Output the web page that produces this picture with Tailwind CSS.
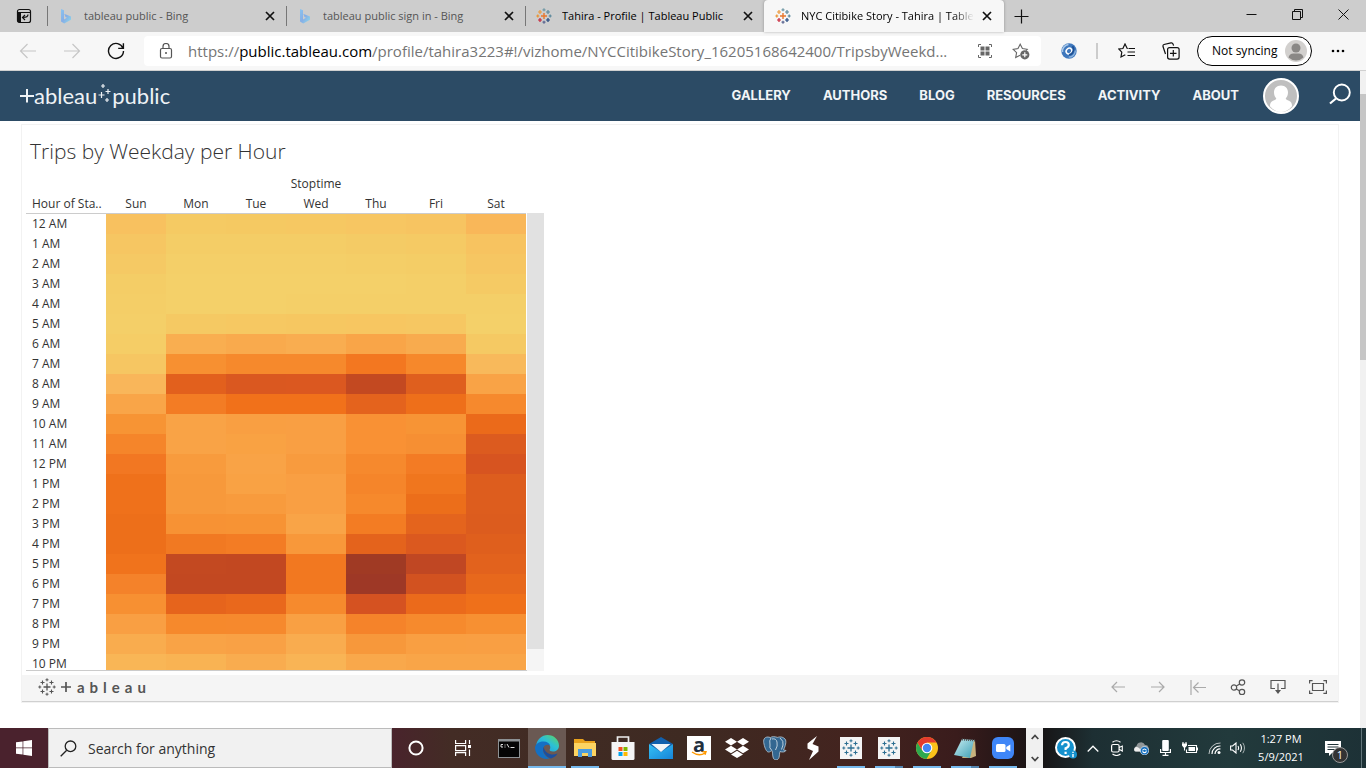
<!DOCTYPE html>
<html lang="en">
<head>
<meta charset="utf-8">
<title>NYC Citibike Story - Tahira | Tableau Public</title>
<script src="https://cdn.jsdelivr.net/npm/@tailwindcss/browser@4"></script>
</head>
<body class="h-screen flex flex-col overflow-hidden bg-white font-['Open_Sans','Noto_Sans',sans-serif] text-black">
<svg class="absolute size-0" aria-hidden="true">
  <defs>
    <linearGradient id="bingFill" x1="0" y1="0" x2="1" y2="1"><stop offset="0" stop-color="#8ac4f0"/><stop offset=".5" stop-color="#86aee6"/><stop offset="1" stop-color="#8fdcea"/></linearGradient>
    <linearGradient id="edgeA" x1="0" y1="1" x2="1" y2="0"><stop offset="0" stop-color="#1b8fdd"/><stop offset=".55" stop-color="#2cbfd6"/><stop offset="1" stop-color="#62d957"/></linearGradient>
    <linearGradient id="mailFill" x1="0" y1="0" x2="1" y2="1"><stop offset="0" stop-color="#35c0f5"/><stop offset="1" stop-color="#1785d8"/></linearGradient>
    <linearGradient id="noteFill" x1="0" y1="0" x2="1" y2="1"><stop offset="0" stop-color="#c9eef2"/><stop offset="1" stop-color="#3d9fb5"/></linearGradient>
    <symbol id="bing" viewBox="0 0 16 16"><path d="M3 1l3 1.200v9.300l3-1.700-1.500-.8-1.300-3.200L13 8.500v3.300L6.200 15.500 3 13.500z" fill="url(#bingFill)"/></symbol>
    <symbol id="close" viewBox="0 0 10 10"><path d="M1 1l8 8M9 1l-8 8" stroke="#111" stroke-width="1.700" fill="none"/></symbol>
    <symbol id="tab" viewBox="0 0 16 16"><g fill="none" stroke-width="1.200"><path d="M8 5v6M5 8h6" stroke="#e8762c" stroke-width="1.400"/><path d="M4 2v4M2 4h4" stroke="#ec9a3c"/><path d="M12 2v4M10 4h4" stroke="#5b879b"/><path d="M4 10v4M2 12h4" stroke="#c72035"/><path d="M12 10v4M10 12h4" stroke="#1f447e"/><path d="M8 .3v3M6.500 1.800h3" stroke="#7099a6"/><path d="M8 12.700v3M6.500 14.200h3" stroke="#5b6591"/><path d="M.3 8h3M1.800 6.500v3" stroke="#eb912c"/><path d="M12.700 8h3M14.200 6.500v3" stroke="#59879b"/></g></symbol>
    <symbol id="tabMono" viewBox="0 0 18 18"><g fill="none" stroke="currentColor"><path d="M9 5.500v7M5.500 9h7" stroke-width="1.300"/><path d="M4.500 2.500v4M2.500 4.500h4M13.500 2.500v4M11.500 4.500h4M4.500 11.500v4M2.500 13.500h4M13.500 11.500v4M11.500 13.500h4" stroke-width="1.100"/><path d="M9 .3v3M7.500 1.800h3M9 14.700v3M7.500 16.200h3M.3 9h3M1.800 7.500v3M14.700 9h3M16.200 7.500v3" stroke-width="1"/></g></symbol>
  </defs>
</svg>

<!-- Browser tabs -->
<header class="shrink-0">
  <div class="flex h-8 bg-[#cdcdcd] text-[11px] text-[#555]">
    <button aria-label="Tab actions" class="w-[47px] shrink-0 flex items-center justify-center"><svg class="size-4" viewBox="0 0 16 16"><rect x="1.500" y="1.500" width="13" height="13" rx="2" fill="none" stroke="#111" stroke-width="1.200"/><path d="M1.500 4.500h3.500v10H3a1.500 1.500 0 0 1-1.500-1.500z" fill="#111"/><path d="M2 4.500h12.500" stroke="#111"/><path d="M12 6.500q0 3-5 3M9 7L6.500 9.500 9 12" fill="none" stroke="#111" stroke-width="1.200"/></svg></button>
    <div class="relative w-[239px] min-w-0 flex items-center gap-[10px] pl-[11px] pr-[11px]"><span class="absolute left-0 top-[6px] h-5 w-px bg-[#777]"></span><svg class="size-4 shrink-0"><use href="#bing"/></svg><span class="flex-1 truncate">tableau public - Bing</span><button aria-label="Close tab"><svg class="size-[10px]"><use href="#close"/></svg></button></div>
    <div class="relative w-[239px] min-w-0 flex items-center gap-[10px] pl-[11px] pr-[11px]"><span class="absolute left-0 top-[6px] h-5 w-px bg-[#777]"></span><svg class="size-4 shrink-0"><use href="#bing"/></svg><span class="flex-1 truncate">tableau public sign in - Bing</span><button aria-label="Close tab"><svg class="size-[10px]"><use href="#close"/></svg></button></div>
    <div class="relative w-[239px] min-w-0 flex items-center gap-[10px] pl-[11px] pr-[11px] text-black"><span class="absolute left-0 top-[6px] h-5 w-px bg-[#777]"></span><svg class="size-4 shrink-0"><use href="#tab"/></svg><span class="flex-1 truncate">Tahira - Profile | Tableau Public</span><button aria-label="Close tab"><svg class="size-[10px]"><use href="#close"/></svg></button></div>
    <div class="w-60 min-w-0 flex items-center gap-2 pl-[11px] pr-3 rounded-t-[4px] bg-[#f7f7f7] text-black shadow-[0_0_3px_rgba(0,0,0,.3)]"><svg class="size-4 shrink-0 mr-[2px]"><use href="#tab"/></svg><span class="flex-1 whitespace-nowrap mask-r-from-88% mask-r-to-100%">NYC Citibike Story - Tahira | Table</span><button aria-label="Close tab"><svg class="size-[10px]"><use href="#close"/></svg></button></div>
    <button aria-label="New tab" class="w-[35px] flex items-center justify-center"><svg class="size-[15px]" viewBox="0 0 15 15"><path d="M7.500 .5v14M.5 7.500h14" stroke="#111" stroke-width="1.200"/></svg></button>
    <div class="ml-auto flex pb-1">
      <button aria-label="Minimize" class="w-[46px] flex items-center justify-center"><svg class="size-[11px]" viewBox="0 0 11 11"><path d="M.5 5.500h10" stroke="#111"/></svg></button>
      <button aria-label="Restore" class="w-[46px] flex items-center justify-center"><svg class="size-[11px]" viewBox="0 0 11 11"><path d="M.5 2.500h8v8h-8zM2.500 2.500v-2h8v8h-2" fill="none" stroke="#111"/></svg></button>
      <button aria-label="Close window" class="w-[46px] flex items-center justify-center"><svg class="size-[11px]" viewBox="0 0 11 11"><path d="M.5 .5l10 10M10.500 .5l-10 10" stroke="#111"/></svg></button>
    </div>
  </div>

  <!-- Address bar -->
  <div class="flex items-center h-[39px] bg-[#f7f7f7] border-b border-[#d0d0d0] pl-[6px] pr-[6px]">
    <button aria-label="Back" class="w-11 flex justify-center"><svg class="size-[18px]" viewBox="0 0 18 18"><path d="M17 9H1.500M8.500 2l-7 7 7 7" fill="none" stroke="#c6c6c6" stroke-width="1.200"/></svg></button>
    <button aria-label="Forward" class="w-11 flex justify-center"><svg class="size-[18px]" viewBox="0 0 18 18"><path d="M1 9h15.500M9.500 2l7 7-7 7" fill="none" stroke="#c6c6c6" stroke-width="1.200"/></svg></button>
    <button aria-label="Reload" class="w-11 flex justify-center"><svg class="size-[18px]" viewBox="0 0 18 18"><path d="M16 6.200A7.500 7.500 0 1 0 16.500 9M16.400 1.200v5.200h-5.200" fill="none" stroke="#111" stroke-width="1.400"/></svg></button>
    <div class="ml-[6px] flex-1 min-w-0 h-[30px] flex items-center rounded-[4px] bg-white pl-[15px] pr-[11px]">
      <svg class="w-[14px] h-4 shrink-0" viewBox="0 0 14 16"><rect x="1.500" y="5.500" width="11" height="9.500" rx="1.500" fill="none" stroke="#555" stroke-width="1.200"/><path d="M4 5.500V3.500a3 3 0 0 1 6 0v2" fill="none" stroke="#555" stroke-width="1.200"/><circle cx="7" cy="10" r="1" fill="#555"/></svg>
      <div role="textbox" aria-label="Address" contenteditable="true" class="ml-[15px] flex-1 min-w-0 truncate text-[15px] leading-5 text-[#757575]">https://<span class="text-black">public.tableau.com</span>/profile/tahira3223#!/vizhome/NYCCitibikeStory_16205168642400/TripsbyWeekd...</div>
      <button aria-label="QR code"><svg class="size-[14px]" viewBox="0 0 14 14"><path d="M.5 3V.5H3M11 .5h2.500V3M13.500 11v2.500H11M3 13.500H.5V11" fill="none" stroke="#666"/><path d="M2.500 2.500h4v4h-4zM7.500 2.500h4v4h-4zM2.500 7.500h4v4h-4zM7.500 7.500h4v4h-4z" fill="#666"/></svg></button>
      <button aria-label="Add to favorites" class="ml-5"><svg class="size-[18px]" viewBox="0 0 18 18"><path d="M8 13.200l-4.300 2.300.9-4.800L1.200 7.300l4.800-.7L8.200 2.200l2.200 4.400 4.800.7-1.200 1.200" fill="none" stroke="#666" stroke-width="1.100"/><circle cx="12.800" cy="12.800" r="4.600" fill="#666"/><path d="M12.800 10.300v5M10.300 12.800h5" stroke="#fff" stroke-width="1.200"/></svg></button>
    </div>
    <button aria-label="Extension" class="ml-5"><svg class="size-4" viewBox="0 0 16 16"><circle cx="8" cy="8" r="7.700" fill="#3f78bd"/><path d="M1.500 9a6.700 6.700 0 0 1 6-7.500" stroke="#a9c8e8" stroke-width="1.600" fill="none"/><path d="M14.300 7.500a6.500 6.500 0 0 1-6.500 6.700" fill="none" stroke="#8fb5de" stroke-width="1.300"/><ellipse cx="8" cy="8" rx="3" ry="2.600" transform="rotate(-40 8 8)" fill="none" stroke="#fff" stroke-width="1.500"/><path d="M11.500 3.200c2.500 3 .5 8-3.500 8.500" fill="none" stroke="#1d4f93" stroke-width="1.600"/></svg></button>
    <span class="ml-[19px] h-4 w-[2px] bg-[#ccc]"></span>
    <button aria-label="Favorites" class="ml-5"><svg class="w-[18px] h-4" viewBox="0 0 18 16"><path d="M9.800 5.500h-.6L7 1 4.900 5.500 .8 6l3 3.200-.8 4.800 4.300-2.300" fill="none" stroke="#111" stroke-width="1.200"/><path d="M10.500 5.500h6.500M9.500 9h7.500M9.500 12.500h7.500" stroke="#111" stroke-width="1.200"/></svg></button>
    <button aria-label="Collections" class="ml-[26px]"><svg class="size-[18px]" viewBox="0 0 18 18"><rect x="5.600" y="5.600" width="11.500" height="11.500" rx="2" fill="none" stroke="#111" stroke-width="1.200"/><path d="M11.300 8v6.500M8 11.300h6.500M3.500 12L1 4.500Q.7 3 2 2.500L9 .9q1.500-.3 2 1.100l.6 1.600" fill="none" stroke="#111" stroke-width="1.200"/></svg></button>
    <button class="ml-[17px] h-[30px] w-[115px] flex items-center justify-between rounded-full border border-black bg-white pl-[14px] pr-1 text-[12px] whitespace-nowrap">Not syncing<svg class="size-[22px]" viewBox="0 0 22 22"><circle cx="11" cy="11" r="11" fill="#d2d0ce"/><circle cx="11" cy="8" r="4.500" fill="#8a8886"/><path d="M3.500 17.500q1-4 5-4h5q4 0 5 4a11 11 0 0 1-15 0" fill="#8a8886"/></svg></button>
    <button aria-label="More" class="w-12 pl-1 flex justify-center"><svg class="w-[14px] h-1" viewBox="0 0 14 4"><circle cx="2" cy="2" r="1.300"/><circle cx="7" cy="2" r="1.300"/><circle cx="12" cy="2" r="1.300"/></svg></button>
  </div>
</header>

<!-- Page -->
<div class="flex-1 min-h-0 flex">
  <main class="flex-1 min-w-0 flex flex-col">
    <div class="h-[50px] shrink-0 flex items-center bg-[#2c4b65] pl-5 pr-[9px] text-white">
      <a href="#" aria-label="Tableau Public" class="flex items-center font-[Lato,sans-serif] text-[22px] leading-6 text-[#eef2f5]"><svg class="w-[14px] h-6" viewBox="0 0 14 24"><path d="M0 12h14M7 5v13.500" stroke="currentColor" stroke-width="2"/></svg><span>ableau</span><svg class="w-[14px] h-6" viewBox="0 0 14 24"><path d="M6 0v4M4 2h4M4.500 8v6M1.500 11h6M11 5v5M8.500 7.500h5M10 14v4M8 16h4" stroke="currentColor" stroke-width="1.200"/></svg><span class="pl-px">public</span></a>
      <nav class="ml-auto flex gap-8 pb-[2px] font-[Inter,Roboto,sans-serif] font-bold text-[13px] leading-5 text-[#f2f5f7]"><a href="#">GALLERY</a><a href="#">AUTHORS</a><a href="#">BLOG</a><a href="#">RESOURCES</a><a href="#">ACTIVITY</a><a href="#">ABOUT</a></nav>
      <button aria-label="Account" class="ml-6"><svg class="size-9" viewBox="0 0 36 36"><circle cx="18" cy="18" r="17" fill="#bfbfbf"/><path d="M18 7.500c4.500 0 7 3 7 7 0 2.600-1 4.500-2.300 6 .3 1.300 1.500 1.600 3.300 2.200 2.500.8 3 3.300 3 5.500-3 3.800-7 5.800-11 5.800s-8-2-11-5.800c0-2.200.5-4.700 3-5.500 1.800-.6 3-.9 3.300-2.200-1.300-1.500-2.300-3.400-2.300-6 0-4 2.500-7 7-7" fill="#fff"/><circle cx="18" cy="18" r="17" fill="none" stroke="#fff" stroke-width="2"/></svg></button>
      <button aria-label="Search" class="ml-[30px] pb-1"><svg class="size-[22px]" viewBox="0 0 22 22"><circle cx="12.800" cy="9.500" r="8" fill="none" stroke="#fff" stroke-width="1.900"/><path d="M7 15.500L1 20.500" stroke="#fff" stroke-width="2.200"/></svg></button>
    </div>

    <section class="mt-[3px] mx-[21px] flex flex-col border border-[#f2f2f2]">
      <h1 class="mt-2 ml-2 text-[21px] leading-9 font-light text-[#333]">Trips by Weekday per Hour</h1>
      <div class="mt-[5px] ml-1 flex items-end">
        <div class="h-[497px] overflow-hidden border-b border-[#ccc] w-[501px]">
          <table class="table-fixed border-separate border-spacing-0 w-[500px] text-[12px] leading-5 text-[#333]">
            <colgroup><col class="w-20"><col class="w-[60px]" span="7"></colgroup>
            <thead>
              <tr class="h-5"><th class="p-0"></th><th colspan="7" class="p-0 font-normal">Stoptime</th></tr>
              <tr id="days" class="h-5 leading-[19px]"><th scope="col" class="p-0 pl-[6px] font-normal text-left whitespace-nowrap border-b border-[#ccc]">Hour of Sta..</th></tr>
            </thead>
            <tbody id="heat"></tbody>
          </table>
        </div>
        <div class="h-[458px] w-[17px] bg-[#f5f5f5]"><div class="h-[436px] bg-[#e1e1e1]"></div></div>
      </div>
      <footer class="mt-1 h-[27px] flex items-center bg-[#f5f5f5] border-b border-[#d0d0d0] pl-4 pb-[2px] text-[#555]">
        <a href="#" aria-label="Tableau" class="flex items-center font-[Lato,sans-serif] text-[15px] leading-5 tracking-[5px] font-bold"><svg class="size-[18px] mr-[5px]"><use href="#tabMono"/></svg><svg class="w-[10px] h-[14px] mr-[6px]" viewBox="0 0 10 14"><path d="M0 7h10M5 2v10" stroke="currentColor" stroke-width="1.700"/></svg>ableau</a>
        <div class="ml-auto flex items-center">
          <button aria-label="Undo" class="w-10 flex justify-center"><svg class="w-[14px] h-3" viewBox="0 0 14 12"><path d="M14 6H1M6 1L1 6l5 5" fill="none" stroke="#aaa" stroke-width="1.200"/></svg></button>
          <button aria-label="Redo" class="w-10 flex justify-center"><svg class="w-[14px] h-3" viewBox="0 0 14 12"><path d="M0 6h13M8 1l5 5-5 5" fill="none" stroke="#aaa" stroke-width="1.200"/></svg></button>
          <button aria-label="Revert" class="w-10 flex justify-center"><svg class="w-4 h-[15px]" viewBox="0 0 16 15"><path d="M1 0v15M16 7.500H3.500M8.500 2.500l-5 5 5 5" fill="none" stroke="#aaa" stroke-width="1.200"/></svg></button>
          <button aria-label="Share" class="w-10 flex justify-center"><svg class="size-4" viewBox="0 0 16 16"><g fill="none" stroke="#555" stroke-width="1.200"><circle cx="4" cy="8.500" r="2.700"/><circle cx="12" cy="3.500" r="2.700"/><circle cx="12" cy="13" r="2.700"/><path d="M6.300 7l3.500-2M6.300 10l3.500 2"/></g></svg></button>
          <button aria-label="Download" class="w-10 flex justify-center"><svg class="size-4" viewBox="0 0 16 16"><path d="M5 9.500H1v-8h14v8h-4M8 4.500v7" fill="none" stroke="#555" stroke-width="1.200"/><path d="M5 11h6l-3 4z" fill="#555"/></svg></button>
          <button aria-label="Full screen" class="w-10 flex justify-center"><svg class="w-[18px] h-[14px]" viewBox="0 0 18 14"><path d="M.6 3.500V.6h3M14.400 .6h3v2.900M17.400 10.500v2.900h-3M3.600 13.400h-3v-2.900M3.500 3.500h11v7h-11z" fill="none" stroke="#555" stroke-width="1.200"/></svg></button>
        </div>
      </footer>
    </section>
  </main>
  <div class="w-[6px] shrink-0 bg-[#f1f1f1] pt-[23px]"><div class="h-[266px] bg-[#c6c6c6]"></div></div>
</div>

<!-- Taskbar -->
<footer class="h-10 shrink-0 flex items-stretch text-white bg-[linear-gradient(90deg,#4a222d_0%,#4a222d_28%,#432c25_33%,#3e2a22_50%,#43241f_62%,#3a1c1c_70%,#171314_76%,#1d2f33_80%,#223a3c_90%,#1d3136_100%)]">
  <button aria-label="Start" class="w-12 flex items-center justify-center"><svg class="size-4" viewBox="0 0 16 16"><path d="M0 2.300l6.600-.9v6.200H0zM7.300 1.300L16 0v7.600H7.300zM0 8.300h6.600v6.300L0 13.700zM7.300 8.300H16V16l-8.700-1.300z" fill="#fff"/></svg></button>
  <label class="w-[344px] flex items-center gap-[11px] border border-[#bbb] bg-[#f1f1f1] pl-[11px]">
    <svg class="size-[17px] shrink-0" viewBox="0 0 17 17"><circle cx="10.500" cy="6.300" r="5.300" fill="none" stroke="#222" stroke-width="1.300"/><path d="M6.700 10.200L.7 16.200" stroke="#222" stroke-width="1.300"/></svg>
    <input type="text" aria-label="Search" placeholder="Search for anything" class="min-w-0 flex-1 bg-transparent text-[14px] outline-none placeholder:text-[#333]">
  </label>
  <button aria-label="Cortana" class="w-12 flex items-center justify-center"><svg class="size-4" viewBox="0 0 16 16"><circle cx="8" cy="8" r="6.600" fill="none" stroke="#fff" stroke-width="2"/></svg></button>
  <button aria-label="Task view" class="w-[46px] flex items-center justify-center"><svg class="size-4" viewBox="0 0 16 16"><path d="M.6 0v3.500h10V0M.6 5.600h10v5H.6zM.6 16v-3.300h10V16M14.500 0v4M14.500 9.500V16" fill="none" stroke="#fff" stroke-width="1.200"/><path d="M13 5h3v3h-3z" fill="#fff"/></svg></button>
  <div class="flex pl-1">
    <button aria-label="Command Prompt" class="w-[38px] flex items-center justify-center"><svg class="w-[22px] h-[19px]" viewBox="0 0 22 19"><path d="M0 0h22v19H0z" fill="#8d9194"/><path d="M1 2.500h20V18H1z" fill="#050505"/><path d="M5 5.500H3v2.500h2M6.500 6h1M6.500 8h1M9 5l2 3.500M12.500 8.500h4" stroke="#ddd" fill="none"/></svg></button>
    <button aria-label="Edge" class="w-[38px] flex items-center justify-center bg-[#6a5953] border-b-2 border-[#76b9ed]"><svg class="size-6" viewBox="0 0 24 24"><path d="M1 11C2 4 7 0 12.500 0 19 0 24 5 24 10.500c0 4-3 6-6 6-2.500 0-3.800-1-3.300-2 1.300-2 .8-6-4.200-7C6 7 2 8.500 1 11" fill="url(#edgeA)"/><path d="M0 12.500C.5 9 4 6.500 8.500 6.500c3.500 0 6 2 6.500 4-2-1.300-5-.8-6.300 1.500-2 4 1 9.500 6 11.500C7 25.500 0 20 0 12.500" fill="#1470c4"/><path d="M8.500 12c-1.800 4.500 2.500 10 7.500 11.400 3-1 5.500-3 6.500-5-5 2.500-12 1-14-6.400" fill="#1b4fa0"/></svg></button>
    <button aria-label="File Explorer" class="relative w-[38px] flex items-center justify-center"><svg class="w-[22px] h-[18px]" viewBox="0 0 22 18"><path d="M0 0h9l2 2h10v14H0z" fill="#e9a21c"/><path d="M0 4h22v13H0z" fill="#fcd462"/><path d="M4 18v-8h14v8h-4v-4H8v4z" fill="#4a9ce0"/></svg><span class="absolute inset-x-[5px] bottom-0 h-[2px] bg-[#76b9ed]"></span></button>
    <button aria-label="Store" class="w-[38px] flex items-center justify-center"><svg class="size-6" viewBox="0 0 24 24"><path d="M6.500 8V1h11v7" fill="none" stroke="#eee" stroke-width="1.700"/><path d="M.5 6h23v16.500q0 1.500-1.500 1.500H2q-1.500 0-1.500-1.500z" fill="#f5f5f5"/><path d="M7.500 11h4v4h-4z" fill="#f25022"/><path d="M12.500 11h4v4h-4z" fill="#7fba00"/><path d="M7.500 16h4v4h-4z" fill="#00a4ef"/><path d="M12.500 16h4v4h-4z" fill="#ffb900"/></svg></button>
    <button aria-label="Mail" class="w-[38px] flex items-center justify-center"><svg class="size-6" viewBox="0 0 24 24"><path d="M0 8L12 1l12 7-12 9z" fill="#1260ad"/><path d="M0 8l12 8 12-8v15H0z" fill="url(#mailFill)"/><path d="M2.500 8h19L12 16z" fill="#f2f5f8"/></svg></button>
    <button aria-label="Amazon" class="w-[38px] flex items-center justify-center"><span class="relative size-6 bg-white flex justify-center text-[20px] leading-[18px] font-bold text-[#222f3e]">a<svg class="absolute left-1 bottom-1 w-4 h-[5px]" viewBox="0 0 16 5"><path d="M1 1q7 5 13 1M11.500 .8l3.500-.1-1 3" fill="none" stroke="#f90" stroke-width="1.400"/></svg></span></button>
    <button aria-label="Dropbox" class="w-[38px] flex items-center justify-center"><svg class="w-6 h-5" viewBox="0 0 24 20"><path d="M6 0l6 3.700-6 3.700-6-3.700zM18 0l6 3.700-6 3.700-6-3.700zM6 7.800l6 3.700-6 3.700-6-3.700zM18 7.800l6 3.700-6 3.700-6-3.700zM12 12.700l6 3.700L12 20l-6-3.600z" fill="#fff"/></svg></button>
    <button aria-label="pgAdmin" class="w-[38px] flex items-center justify-center"><svg class="size-6" viewBox="0 0 24 24"><path d="M5 1C1 1 0 4 1 8c.8 4 2.500 8 4.500 8s2-1 3.500-1.500c.8 1.500.3 5 1.300 7.500.8 2.500 5 2.500 5.700-.5.500-2 .5-4.500 1-6 2 1 5.500.5 6-1l-2.500-.5C22 11 24 5 22 3c-3-3-6-2-7.500-1.600C11 .3 9 .5 7.500 1.500z" fill="#336791" stroke="#b9cbd9" stroke-width=".8"/><path d="M8 2Q6 4 7 9q-1 3 1.500 5M9 3q4-1 5 3 1 4-1.500 8M17 2q4 3 3 7l-1.500 4.500" fill="none" stroke="#c9d8e3" stroke-width=".9"/></svg></button>
    <button aria-label="Stata" class="w-[38px] flex items-center justify-center"><svg class="w-3 h-6" viewBox="0 0 12 24"><path d="M10 0L.5 7.500v5L6 15l-4 9 9.500-8.500v-5L5.500 8z" fill="#fff"/></svg></button>
    <button aria-label="Tableau Public" class="relative w-[38px] flex items-center justify-center"><span class="size-[22px] bg-[#f4f4f4] p-[2px] text-[#2c6f92]"><svg class="size-[18px]"><use href="#tabMono"/></svg></span><span class="absolute inset-x-[5px] bottom-0 h-[2px] bg-[#76b9ed]"></span></button>
    <button aria-label="Tableau" class="relative w-[38px] flex items-center justify-center"><span class="size-[22px] bg-[#f4f4f4] p-[2px] text-[#2c6f92]"><svg class="size-[18px]"><use href="#tabMono"/></svg></span><span class="absolute inset-x-[5px] bottom-0 h-[2px] bg-[#76b9ed] border-r-8 border-[#5484ae]"></span></button>
    <button aria-label="Chrome" class="relative w-[38px] flex items-center justify-center"><svg class="size-[22px]" viewBox="0 0 22 22"><circle cx="11" cy="11" r="11" fill="#fbc21a"/><path d="M11 11L1.500 5.500A11 11 0 0 1 20.500 5.500H11z" fill="#e33b2e"/><path d="M1.500 5.500A11 11 0 0 0 10.500 22l5-8.500L11 11 6.200 13.500z" fill="#2da94f"/><path d="M1.500 5.500l4.700 8L11 11V5.500z" fill="#e33b2e"/><circle cx="11" cy="11" r="5.300" fill="#fff"/><circle cx="11" cy="11" r="4.200" fill="#4285f4"/></svg><span class="absolute inset-x-[5px] bottom-0 h-[2px] bg-[#76b9ed]"></span></button>
    <button aria-label="Notepad" class="relative w-[38px] flex items-center justify-center"><svg class="w-[22px] h-[21px]" viewBox="0 0 22 21"><path d="M17 2h4l1 16-5 2H8z" fill="#c8b27e"/><path d="M8 1l12 1-4 18L0 17z" fill="url(#noteFill)"/><path d="M8 1.500l13 1" stroke="#555" stroke-width="2" stroke-dasharray="1 1"/></svg><span class="absolute inset-x-[5px] bottom-0 h-[2px] bg-[#76b9ed] border-r-8 border-[#5484ae]"></span></button>
    <button aria-label="Zoom" class="relative w-[38px] flex items-center justify-center"><svg class="size-[22px]" viewBox="0 0 22 22"><rect width="22" height="22" rx="6" fill="#3f86f7"/><rect x="4" y="7" width="9.500" height="8" rx="1.500" fill="#fff"/><path d="M14.300 10l4-2.500v7l-4-2.500z" fill="#fff"/></svg><span class="absolute inset-x-[5px] bottom-0 h-[2px] bg-[#76b9ed]"></span></button>
  </div>
  <div class="ml-1 w-[17px] flex flex-col justify-between items-center bg-[#f0f0f0] py-[6px]">
    <button aria-label="Scroll up"><svg class="w-2 h-[6px] block" viewBox="0 0 8 6"><path d="M.7 5L4 1.500 7.300 5" fill="none" stroke="#444" stroke-width="1.800"/></svg></button>
    <button aria-label="Scroll down"><svg class="w-2 h-[6px] block" viewBox="0 0 8 6"><path d="M.7 1L4 4.500 7.300 1" fill="none" stroke="#444" stroke-width="1.800"/></svg></button>
  </div>
  <div class="ml-auto flex items-center">
    <button aria-label="Help" class="w-8 flex justify-center"><svg class="size-[22px]" viewBox="0 0 22 22"><circle cx="10.500" cy="10.500" r="9.500" fill="#1591cd" stroke="#fff" stroke-width="2"/><path d="M7 8.200Q7.200 5 10.500 5t3.300 3Q13.800 10 10.600 11.300V13M10.600 14.800V17" fill="none" stroke="#fff" stroke-width="2.200"/><circle cx="18" cy="17.500" r="4" fill="#1591cd"/><path d="M18 14.800v1.200M18 17v3.200" stroke="#fff" stroke-width="1.400"/></svg></button>
    <button aria-label="Show hidden icons" class="w-[22px] flex justify-center"><svg class="w-3 h-[7px]" viewBox="0 0 12 7"><path d="M.7 6.500L6 1.200l5.300 5.300" fill="none" stroke="#fff" stroke-width="1.300"/></svg></button>
    <button aria-label="Meet now" class="w-[25px] flex justify-center"><svg class="w-3 h-4" viewBox="0 0 12 16"><rect x=".6" y="4.500" width="7.500" height="7.500" rx="1.500" fill="none" stroke="#fff" stroke-width="1.200"/><path d="M8 7.500l3.300-1.500v5L8 9.300M1.500 2.200q4-3 8 0M1.500 14q4 3 8 0" fill="none" stroke="#fff" stroke-width="1.100"/></svg></button>
    <button aria-label="OneDrive" class="w-6 flex justify-center"><svg class="w-4 h-[13px]" viewBox="0 0 16 13"><path d="M3 9.500a3 3 0 0 1 .5-5.500A4.500 4.500 0 0 1 12 3a3.500 3.500 0 0 1 2 6.500z" fill="#909698"/><path d="M2 9.500a2.600 2.600 0 0 1 1-4.500q3-.5 6 4.500z" fill="#eee"/><circle cx="11.500" cy="8.700" r="4.200" fill="#0f6cbd" stroke="#fff" stroke-width=".6"/><path d="M9.500 8.300q2-2.600 4 0M13.500 9.300q-2 2.600-4 0" fill="none" stroke="#fff" stroke-width="1.100"/></svg></button>
    <button aria-label="Microphone" class="w-6 flex justify-center"><svg class="w-[11px] h-4" viewBox="0 0 11 16"><rect x="2.200" width="6.600" height="11" rx="1" fill="#fff"/><path d="M.6 9v3.500h9.800V9M5.500 12.500V15M2.500 15.400h6" fill="none" stroke="#fff" stroke-width="1.200"/></svg></button>
    <button aria-label="Battery" class="w-[25px] flex justify-center"><svg class="w-4 h-3" viewBox="0 0 16 12"><path d="M6 3.500h8.500v7h-10V7.500M15.500 5.500v3M1 0v2M4 0v2M2.500 5v3.500" fill="none" stroke="#fff" stroke-width="1.100"/><path d="M0 1.500h5v2L3.500 5.500h-2L0 3.500zM6.500 5H13v4H6.500z" fill="#fff"/></svg></button>
    <button aria-label="Wi-Fi" class="w-[25px] flex justify-center"><svg class="w-[13px] h-3" viewBox="0 0 13 12"><g fill="none" stroke="#fff"><path d="M1 12A11 11 0 0 1 12.500 1" opacity=".7"/><path d="M4 12A8 8 0 0 1 12.500 4M7 12a5 5 0 0 1 5.500-5" stroke-width="1.200"/></g><circle cx="11" cy="10.500" r="1.500" fill="#fff"/></svg></button>
    <button aria-label="Volume" class="w-[22px] flex justify-center"><svg class="w-4 h-3" viewBox="0 0 16 12"><path d="M.6 4h2L6 1v10L2.600 8h-2zM8 4q1.200 2 0 4M10.300 2.300q2.300 3.700 0 7.400" fill="none" stroke="#fff" stroke-width="1.100"/><path d="M12.800 .8q3.400 5.200 0 10.400" fill="none" stroke="#fff" opacity=".6"/></svg></button>
    <time datetime="2021-05-09T13:27" class="w-16 text-center text-[11px] leading-[18px] whitespace-nowrap">1:27 PM<br>5/9/2021</time>
    <button aria-label="Notifications, 1 new" class="relative w-12 h-10 flex items-center justify-center pr-2"><svg class="w-4 h-[15px]" viewBox="0 0 16 15"><path d="M0 0h16v12H7l-3 3v-3H0z" fill="#fff"/><path d="M2.500 3.500h11M2.500 6h11M2.500 8.500h7" stroke="#1f3338"/></svg><span class="absolute left-[19px] top-[19px] size-4 rounded-full border border-[#999] bg-[#333] text-[11px] leading-[14px] text-center">1</span></button>
    <span class="mr-1 w-px h-10 bg-[#62757a]"></span>
  </div>
</footer>

<script>
const days = ["Sun", "Mon", "Tue", "Wed", "Thu", "Fri", "Sat"];
const hours = {
  "12 AM": "f8c15f f5ca63 f5c962 f6c862 f7c662 f7c461 f9b759",
  "1 AM": "f6c662 f4cd66 f4cd66 f4cd66 f4cb65 f5ca64 f7c360",
  "2 AM": "f5c964 f4cf68 f4cf68 f4cf68 f4ce67 f4cd66 f6c662",
  "3 AM": "f4cd66 f4d069 f4d069 f4d069 f4d069 f4cf68 f5ca64",
  "4 AM": "f4ce67 f4d069 f4d069 f4cf68 f4cf68 f4cf68 f4cf68",
  "5 AM": "f4cf68 f5c963 f6c862 f6c761 f7c661 f6c762 f4d069",
  "6 AM": "f5cd66 f9ae50 f9aa4d f9ad50 f9a548 f8ab4e f5c963",
  "7 AM": "f6c662 f79031 f6892c f6892c f37720 f6882b f8b95b",
  "8 AM": "f9b65a e2601d da5820 db5820 c34921 df5f1e f9a346",
  "9 AM": "f9a548 f37c24 f1711a f1711a e4631d ee6f1a f6892d",
  "10 AM": "f79434 f9a346 f99f42 f99f43 f99134 f79435 eb6a1a",
  "11 AM": "f5852a f9a346 f9a243 f99f43 f99134 f68f33 dc5b1f",
  "12 PM": "f27722 f89b3d f9a346 f89b3e f6892d f37b24 d75420",
  "1 PM": "ef711b f7993b f9a244 f99f43 f5852a f0761e dd5d1e",
  "2 PM": "ef711b f7993b f89b3d f99f43 f6892c ec6e1a dd5d1e",
  "3 PM": "ed6f1a f79234 f79334 f9a447 f37c23 e4641d dc5c1e",
  "4 PM": "ed6f1a f17922 f37c24 f8983a e4631c db591f df5f1d",
  "5 PM": "f0731c c34921 c24821 f27820 a03a24 c04723 e2621d",
  "6 PM": "f4822a c24821 c24821 f27820 9e3826 d25220 e7681c",
  "7 PM": "f79032 e6641c e9681c f68a2d d55221 eb6a1b ef701a",
  "8 PM": "f99f43 f6892c f6892d f9a043 f5832a f68a2d f79032",
  "9 PM": "f9ac4e f9a346 f9a145 f9ac4f f7983b f99f42 f99f43",
  "10 PM": "f9b656 f9b353 f9ac4f f9b455 f9a84b f9a548 f9a548"
};
document.getElementById("days").insertAdjacentHTML("beforeend",
  days.map(d => `<th scope="col" class="p-0 font-normal border-b border-[#ccc]">${d}</th>`).join(""));
document.getElementById("heat").innerHTML = Object.entries(hours).map(([h, row]) =>
  `<tr class="h-5"><th scope="row" class="p-0 pl-[6px] font-normal text-left">${h}</th>` +
  row.split(" ").map(c => `<td class="p-0" style="background-color:#${c}"></td>`).join("") + "</tr>").join("");
</script>
</body>
</html>
